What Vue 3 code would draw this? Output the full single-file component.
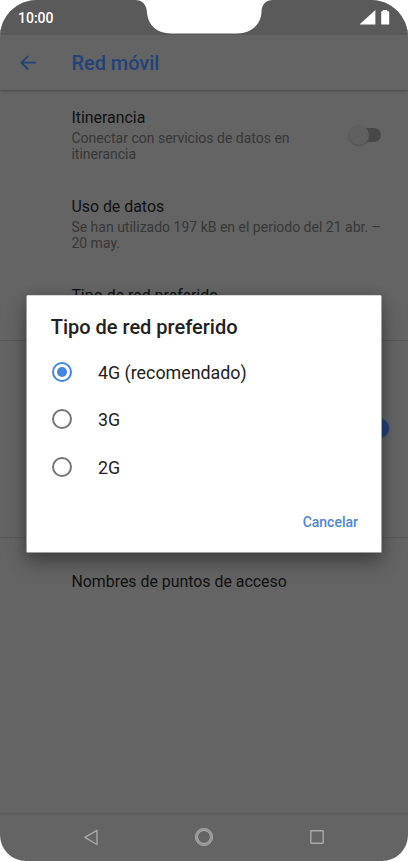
<script setup>
import { ref } from 'vue'

const options = ['4G (recomendado)', '3G', '2G']
const selected = ref('4G (recomendado)')
</script>

<template>
  <div class="screen">
    <header class="status">
      <span class="clock">10:00</span>
      <svg class="status-icons" width="30" height="15" viewBox="0 0 30 15">
        <path d="M0 14.6V14L15.4 0V14.6Z" fill="#fff" />
        <path d="M22.8 1.3V0H27.2V1.3H28.5Q29.2 1.3 29.2 2V13.9Q29.2 14.6 28.5 14.6H21.9Q21.2 14.6 21.2 13.9V2Q21.2 1.3 21.9 1.3Z" fill="#fff" />
      </svg>
    </header>
    <div class="appbar">
      <svg class="back" width="16" height="16" viewBox="0 0 16 16" fill="none" stroke="currentColor" stroke-width="1.8">
        <path d="M15.8 7.700H1.6M8.2 .9L1.4 7.700L8.2 14.500" />
      </svg>
      <h1>Red móvil</h1>
    </div>
    <main>
      <section class="row roaming">
        <div class="copy">
          <h2>Itinerancia</h2>
          <p>Conectar con servicios de datos en<br>itinerancia</p>
        </div>
        <span class="switch"><i></i></span>
      </section>
      <section class="row usage">
        <div class="copy">
          <h2>Uso de datos</h2>
          <p class="period">Se han utilizado 197 kB en el periodo del 21 abr. –<br>20 may.</p>
        </div>
      </section>
      <section class="row network"><h2>Tipo de red preferido</h2></section>
      <section class="row calls"><span class="switch on"><i></i></span></section>
      <section class="row apn"><h2>Nombres de puntos de acceso</h2></section>
    </main>
    <nav>
      <svg width="14" height="17" viewBox="0 0 14 17" fill="none" stroke="#a8a8a8" stroke-width="1.4" stroke-linejoin="round">
        <path d="M13 1.3V15.5L.9 8.4Z" />
      </svg>
      <svg width="20" height="20" viewBox="0 0 20 20" fill="none" stroke="#a8a8a8">
        <circle cx="10" cy="10" r="7.7" stroke-width="2.6" stroke="#8d8d8d" />
        <circle cx="10" cy="10" r="8.5" stroke-width="1" />
        <circle cx="10" cy="10" r="6.6" stroke-width="1.1" />
      </svg>
      <svg width="14" height="14" viewBox="0 0 14 14" fill="none" stroke="#a8a8a8" stroke-width="1.4">
        <rect x=".8" y=".8" width="12.4" height="12.4" rx=".4" />
      </svg>
    </nav>

    <div class="dialog" role="dialog">
      <h3>Tipo de red preferido</h3>
      <ul>
        <li v-for="o in options" :key="o" @click="selected = o">
          <span class="radio" :class="{ checked: selected === o }"></span>
          <span class="label">{{ o }}</span>
        </li>
      </ul>
      <button>Cancelar</button>
    </div>

    <svg class="notch" width="138" height="34" viewBox="0 0 138 34">
      <path d="M0 0C7 0 12 4.5 12 13C13 25 22 33.5 36 33.5H102C116 33.5 126 24.5 126.500 12C126.500 4.500 131 0 138 0Z" fill="#fff" />
    </svg>
  </div>
</template>

<style>
body { margin: 0; background: #fff; }
</style>

<style scoped>
.screen {
  position: relative;
  display: flex;
  flex-direction: column;
  width: 408px;
  height: 861px;
  overflow: hidden;
  border-radius: 37px 37px 26px 26px;
  background: #646464;
  font-family: Roboto, sans-serif;
  color: #111;
}
h1, h2, h3, p, ul { margin: 0; padding: 0; }
.status {
  display: flex;
  justify-content: space-between;
  box-sizing: border-box;
  height: 35px;
  padding: 10px 18px 0;
  background: #5a5a5a;
}
.clock { font-size: 14px; line-height: 16px; font-weight: 500; color: #fff; }
.appbar {
  display: flex;
  align-items: center;
  box-sizing: border-box;
  height: 55px;
  padding: 0 20px;
  box-shadow: 0 1px 2px #4a4a4a;
  color: #22427a;
}
h1 { margin-left: 35.500px; padding-top: 2px; font-size: 19.900px; font-weight: 500; line-height: 24px; }
main { flex: 1; display: flex; flex-direction: column; }
.row { display: flex; box-sizing: border-box; padding-left: 71.400px; }
h2 { font-size: 15.900px; line-height: 20px; font-weight: 400; }
p { margin-top: 2px; font-size: 14px; line-height: 16px; color: #373737; white-space: nowrap; }
.roaming { height: 89px; padding-top: 18px; padding-right: 27px; justify-content: space-between; }
.usage { height: 88px; padding-top: 18px; }
.network { height: 74px; padding-top: 19px; border-bottom: 1px solid #565656; }
.calls { height: 197px; align-items: center; justify-content: flex-end; padding: 0 19px 22px 0; border-bottom: 1px solid #565656; }
.apn { padding-top: 34px; }
.switch {
  display: flex;
  align-items: center;
  width: 28px;
  height: 14px;
  margin-top: 20px;
  border-radius: 7px;
  background: #484848;
}
.switch i { width: 20px; height: 20px; margin-left: -4px; border-radius: 50%; background: #606060; box-shadow: 0 1px 2px #4e4e4e; flex: none; }
.switch.on { justify-content: flex-end; margin-top: 0; }
.switch.on i { margin-left: 0; background: #22427a; }
nav {
  display: flex;
  align-items: center;
  justify-content: space-between;
  box-sizing: border-box;
  height: 48px;
  padding: 0 84px 2px;
  border-top: 2px solid #5c5c5c;
}
.dialog {
  position: absolute;
  left: 26px;
  top: 295px;
  display: flex;
  flex-direction: column;
  box-sizing: border-box;
  width: 356px;
  height: 258px;
  padding: 19px 23px 20px 24px;
  border: 1px solid #a0a0a0;
  border-top-color: #d8d8d8;
  border-radius: 2px;
  background: #fff;
  box-shadow: 0 10px 20px rgba(0, 0, 0, .3), 0 2px 12px rgba(0, 0, 0, .15);
  color: #212121;
}
h3 { margin-left: -.3px; font-size: 20px; line-height: 24px; font-weight: 500; }
ul { list-style: none; margin-top: 9px; }
li { display: flex; align-items: center; height: 47.600px; }
.radio { display: grid; place-items: center; box-sizing: border-box; width: 20px; height: 20px; margin-left: 1px; border: 2px solid #757575; border-radius: 50%; }
.radio.checked { border-color: #4485df; }
.radio.checked::after { content: ''; width: 10px; height: 10px; border-radius: 50%; background: #4485df; }
.label { margin-left: 26px; padding-top: 1.500px; font-size: 17.850px; line-height: 22px; }
button { align-self: flex-end; margin-top: 21px; padding: 0; border: 0; background: none; font: 500 14px/20px Roboto, sans-serif; color: #4f86d3; }
.notch { position: absolute; left: 135px; top: 0; }
</style>
